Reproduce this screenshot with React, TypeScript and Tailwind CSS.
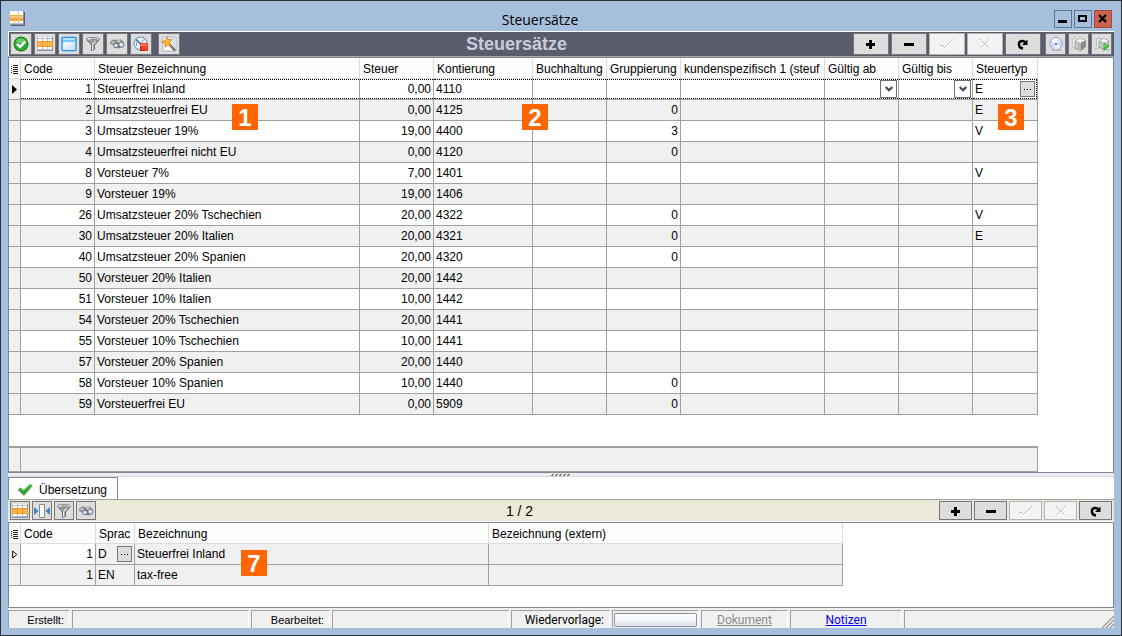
import type { ReactNode } from "react";
import clsx from "clsx";

/* ---------- icons ---------- */

const Svg = ({ children, className = "size-4" }: { children: ReactNode; className?: string }) => (
  <svg viewBox="0 0 16 16" className={clsx("block shrink-0", className)} aria-hidden="true">
    {children}
  </svg>
);

const GridIcon = () => (
  <Svg>
    <path d="M0 1h16v14H0z" fill="#b9bfca" />
    <path d="M1 1h4v1H1zM6 1h4v1H6zM11 1h4v1h-4zM1 3h4v2H1zM6 3h4v2H6zM11 3h4v2h-4zM1 11h4v2H1zM6 11h4v2H6zM11 11h4v2h-4z" fill="#fafbfd" />
    <path d="M0 14h16v1H0zM15 1h1v14h-1z" fill="#8b92a3" />
    <path d="M0 5h16v6H0z" fill="#f39a1e" />
    <path d="M1 6h4v4H1zM6 6h4v4H6zM11 6h4v4h-4z" fill="#fdb656" />
  </Svg>
);

const AppIcon = () => (
  <Svg>
    <path d="M1 1h14v14H1z" fill="#5b6272" />
    <path d="M0 0h14v14H0z" fill="#fff" />
    <path d="M0 4h13v6H0z" fill="#f7a63a" />
    <path d="M0 5h13v2H0z" fill="#fcc77e" />
    <path d="M8 0h1v14H8zM4 10h1v4H4zM0 12h13v1H0z" fill="#c5c2c2" />
    <path d="M13 0h1v14h-1zM0 13h14v1H0z" fill="#8b8f99" />
  </Svg>
);

const OkIcon = () => (
  <Svg>
    <circle cx="8" cy="8" r="7.5" fill="#15801d" />
    <circle cx="8" cy="8" r="6.5" fill="#2fa935" />
    <path d="M2.500 6a6 6 0 0 1 11 0Q8 8 2.500 6z" fill="#6fcb6b" />
    <path d="M4 7.800 7 10.800l5.200-5.200" fill="none" stroke="#fff" strokeWidth="2.600" />
  </Svg>
);

const WindowIcon = () => (
  <Svg>
    <rect x="1" y="1.500" width="14" height="13" rx="1" fill="#eaf2ff" stroke="#1e9bf0" strokeWidth="1.400" />
    <path d="M2 2.400h12V5H2z" fill="#bfe0fb" />
    <path d="M1.500 5h13" stroke="#1e9bf0" />
    <path d="M2 14 14 6v8z" fill="#d7e4fb" />
  </Svg>
);

const FilterIcon = () => (
  <Svg>
    <path d="M1.500 3.500 6.500 9v5.500l3-1.200V9l5-5.500z" fill="#9b9b9b" stroke="#555" strokeWidth="0.800" />
    <path d="M7.600 9v5M7.500 8.500 11 5" stroke="#e9e9e9" strokeWidth="1.200" />
    <ellipse cx="8" cy="3.200" rx="6.600" ry="1.800" fill="#f4f4f4" stroke="#6f6f6f" strokeWidth="0.800" />
    <ellipse cx="8.500" cy="3.500" rx="4" ry="0.900" fill="#8d8d8d" />
  </Svg>
);

const BinocularsIcon = () => (
  <Svg>
    <path d="M1 6 4 3.500 8 4l4-.500 3 3-1 4.500-4 1.500L1.500 8z" fill="#808080" />
    <path d="M1.500 6.500 4 4.500l2.500 1-2 3z" fill="#b9b9b9" />
    <path d="M7 5 10 3.800l3 2-3 1.200z" fill="#c9c9c9" />
    <circle cx="7" cy="9.500" r="2.300" fill="#cfe2f4" stroke="#5d6672" strokeWidth="0.900" />
    <circle cx="12.400" cy="8.700" r="2.600" fill="#cfe2f4" stroke="#5d6672" strokeWidth="0.900" />
    <path d="M6 9h1.500M11.200 8h1.500" stroke="#fff" />
  </Svg>
);

const ClockStopIcon = () => (
  <Svg>
    <circle cx="7.500" cy="7.500" r="6.500" fill="#e8f2fa" stroke="#8fa9c0" strokeWidth="1.400" />
    <path d="M3 3.500 7.500 8" stroke="#3f5f7f" strokeWidth="1.300" />
    <path d="M3.500 6v4M11 3.500 8 7" stroke="#77b0d6" />
    <path d="M7 7h8v8H7z" fill="#e8402a" />
    <path d="M8 8h6v2H8z" fill="#ff7d50" />
    <path d="M7.500 11v3.500H12" fill="none" stroke="#b82414" />
  </Svg>
);

const WizardIcon = () => (
  <Svg>
    <path d="M2 1h13v14H2z" fill="#fbfdff" stroke="#a9bdd6" />
    <path d="M11 2h3v12h-3z" fill="#dbe7f5" />
    <path d="m8 8 6 6.500" stroke="#5f4a30" strokeWidth="2.200" />
    <path d="m6 .8 1.500 3 3.700-.5L8.600 6.200l2 3.300L7 8.600l-3 2.600.1-3.800L.6 5.800l3.800-1.200z" fill="#fdbb3b" stroke="#dd7a12" strokeWidth="0.800" />
    <path d="m9.500 9.500 4 4.500" stroke="#f3c46c" strokeWidth="0.700" />
  </Svg>
);

const DiscIcon = () => (
  <Svg>
    <path d="M5 13h7l2 2H3z" fill="#b9bac6" />
    <circle cx="8" cy="7.500" r="6.200" fill="#d3dafa" stroke="#a3a6cf" strokeWidth="1" />
    <path d="M3.500 4.500A5.500 5.500 0 0 1 10 2.400L8 7.500z" fill="#fbfcff" />
    <path d="M12.500 10.500A5.500 5.500 0 0 1 6 12.700L8 7.500z" fill="#eef1ff" />
    <circle cx="8" cy="7.500" r="2" fill="#f4f6ff" />
    <path d="M7 7h2v2H7z" fill="#6469b8" />
  </Svg>
);

const BoxIcon = () => (
  <Svg>
    <path d="M1.500 3 5 2v8.500L3 12l-1.500-1.500z" fill="#ededed" stroke="#b8b8b8" strokeWidth="0.700" />
    <path d="M4 5 9 2.500l5.500 2V11l-4.500 3.500-6-2z" fill="#bdbdbd" stroke="#909090" strokeWidth="0.700" />
    <path d="M4.500 5 9 2.800l5 1.700-4 2z" fill="#f6f6f6" />
    <path d="M10 6.500 14.500 4.500V11L10 14.500z" fill="#8a8a8a" />
    <path d="M5.500 7v5" stroke="#dedede" />
  </Svg>
);

const BoxRunIcon = () => (
  <Svg>
    <path d="M2.500 3 6 2v8l-2 2-3.500 1 2-2.500z" fill="#eceeec" stroke="#a7aca7" strokeWidth="0.700" />
    <path d="M5 5 9.500 2.500l5 2V10L10 13l-5-1.500z" fill="#c6cac6" stroke="#8a908a" strokeWidth="0.700" />
    <path d="m5.500 5 4-2.200 4.500 1.700-4 2z" fill="#f6f6f6" />
    <path d="M5.500 7.500 8 5M12.500 13l3 1.500" stroke="#8f968f" strokeWidth="0.800" />
    <path d="M9.500 6.500 15.500 10 9.500 15.500z" fill="#3fae3f" />
    <path d="M10.500 8.500 13 10l-2.500 1.500z" fill="#8be07c" />
  </Svg>
);

const FitColumnsIcon = () => (
  <Svg>
    <path d="M5.500 1.500h5v13h-5z" fill="#fdfdfd" stroke="#8a8a8a" />
    <path d="M0 4v8l4.500-4zM16 4v8l-4.500-4z" fill="#3c84c8" />
  </Svg>
);

const GreenCheck = () => (
  <Svg>
    <path d="m1 7.500 2.500-2L6.500 8 13 2l2.500 1.500L7 13.500z" fill="#27a32b" />
    <path d="M2 7.500 3.700 6.300 6.500 9 13 3l1 .6" fill="none" stroke="#72d062" strokeWidth="0.900" />
    <path d="M1 8 7 13.700 15.500 3.800" fill="none" stroke="#8a9a8a" strokeWidth="0.800" />
  </Svg>
);

const PlusIcon = () => (
  <Svg>
    <path d="M6 4h3v3h3v3H9v3H6v-3H3V7h3z" fill="#000" />
  </Svg>
);

const MinusIcon = () => (
  <Svg>
    <path d="M3 7h10v3H3z" fill="#000" />
  </Svg>
);

const AcceptIcon = () => (
  <Svg>
    <path d="M3 10.500 5.500 13 9 9.500 15.500 5" fill="none" stroke="#fff" strokeWidth="1.300" />
    <path d="M1.500 9.500h2l2 2 4-4 4.500-4" fill="none" stroke="#a3a3a3" strokeDasharray="2 1" />
  </Svg>
);

const CancelIcon = () => (
  <Svg>
    <path d="m4 4 9.500 9.500m0-9.500L4 13.500" stroke="#fff" strokeWidth="1.300" />
    <path d="m3 3 9.500 9.500M12.500 3 3 12.500" stroke="#a3a3a3" strokeDasharray="2 1" />
  </Svg>
);

const ReloadIcon = () => (
  <Svg>
    <path d="M8 12.500C3 12 2.500 5.500 7 5c1.500-.2 2.500.3 3.500 1.500" fill="none" stroke="#000" strokeWidth="2.400" />
    <path d="M12.500 3.500v5.500H7z" fill="#000" />
  </Svg>
);

const ListIcon = () => (
  <svg viewBox="0 0 7 9" className="mx-auto block h-[9px] w-[7px]" aria-hidden="true">
    <path d="M2 0h5v1H2zM2 2h5v1H2zM2 4h5v1H2zM2 6h5v1H2zM2 8h5v1H2zM0 1h1v1H0zM0 3h1v1H0zM0 5h1v1H0zM0 7h1v1H0z" fill="#222" />
  </svg>
);

const Dots = () => (
  <svg viewBox="0 0 7 1" className="h-px w-[7px]" aria-hidden="true">
    <path d="M0 0h1v1H0zM3 0h1v1H3zM6 0h1v1H6z" fill="#000" />
  </svg>
);

/* ---------- small parts ---------- */

function ToolButton({ label, children, className, disabled }: { label: string; children: ReactNode; className: string; disabled?: boolean }) {
  return (
    <button
      type="button"
      aria-label={label}
      disabled={disabled}
      className={clsx(
        "flex shrink-0 items-center justify-center border",
        disabled ? "border-[#b4b4b4] bg-[#f3f3f3]" : "border-[#77777b] bg-[#dddddd]",
        className,
      )}
    >
      {children}
    </button>
  );
}

function Badge({ n, className }: { n: number; className: string }) {
  return (
    <span className={clsx("absolute flex size-[26px] items-center justify-center bg-[#ff6600] pt-px text-2xl leading-none font-bold text-white", className)}>
      {n}
    </span>
  );
}

function MoreButton({ label }: { label: string }) {
  return (
    <button type="button" aria-label={label} className="flex h-4 w-[15px] shrink-0 items-center justify-center border border-[#777] bg-[#dddddd]">
      <Dots />
    </button>
  );
}

function DateSelect({ label }: { label: string }) {
  return (
    <div className="relative h-full w-full">
      <select aria-label={label} className="h-full w-full appearance-none bg-transparent pl-0.5">
        <option></option>
      </select>
      <span className="pointer-events-none absolute top-0 right-0 flex h-[18px] w-[17px] items-center justify-center border border-[#707070] bg-white">
        <svg viewBox="0 0 8 6" className="h-1.5 w-2" aria-hidden="true">
          <path d="m.7 1 3.300 3.300L7.300 1" fill="none" stroke="#444" strokeWidth="2" />
        </svg>
      </span>
    </div>
  );
}

const editActions = [
  { label: "Hinzufügen", icon: <PlusIcon />, disabled: false },
  { label: "Löschen", icon: <MinusIcon />, disabled: false },
  { label: "Übernehmen", icon: <AcceptIcon />, disabled: true },
  { label: "Abbrechen", icon: <CancelIcon />, disabled: true },
  { label: "Aktualisieren", icon: <ReloadIcon />, disabled: false },
];

/* ---------- data ---------- */

type Rate = [code: number, name: string, rate: string, account: string, group: string, type: string];

const rates: Rate[] = [
  [1, "Steuerfrei Inland", "0,00", "4110", "", "E"],
  [2, "Umsatzsteuerfrei EU", "0,00", "4125", "0", "E"],
  [3, "Umsatzsteuer 19%", "19,00", "4400", "3", "V"],
  [4, "Umsatzsteuerfrei nicht EU", "0,00", "4120", "0", ""],
  [8, "Vorsteuer 7%", "7,00", "1401", "", "V"],
  [9, "Vorsteuer 19%", "19,00", "1406", "", ""],
  [26, "Umsatzsteuer 20% Tschechien", "20,00", "4322", "0", "V"],
  [30, "Umsatzsteuer 20% Italien", "20,00", "4321", "0", "E"],
  [40, "Umsatzsteuer 20% Spanien", "20,00", "4320", "0", ""],
  [50, "Vorsteuer 20% Italien", "20,00", "1442", "", ""],
  [51, "Vorsteuer 10% Italien", "10,00", "1442", "", ""],
  [54, "Vorsteuer 20% Tschechien", "20,00", "1441", "", ""],
  [55, "Vorsteuer 10% Tschechien", "10,00", "1441", "", ""],
  [57, "Vorsteuer 20% Spanien", "20,00", "1440", "", ""],
  [58, "Vorsteuer 10% Spanien", "10,00", "1440", "0", ""],
  [59, "Vorsteuerfrei EU", "0,00", "5909", "0", ""],
];

const headers = ["Code", "Steuer Bezeichnung", "Steuer", "Kontierung", "Buchhaltung", "Gruppierung", "kundenspezifisch 1 (steuf", "Gültig ab", "Gültig bis", "Steuertyp"];

const thClass = "h-[21px] overflow-hidden border-r border-b border-[#dcdcdc] bg-[#fcfcfc] p-0 pt-0.5 pl-[3px] text-left font-normal whitespace-nowrap";
const tdClass = "h-[21px] border-r border-b border-[#a0a0a0] p-0";
const markClass = "h-[21px] border-r border-b border-[#a0a0a0] bg-[#f0f0f0] p-0";
const markHeadClass = "h-[21px] border-r border-b border-[#dcdcdc] bg-[#fcfcfc] p-0 pt-0.5";

function Cell({ children, right, active, last }: { children?: ReactNode; right?: boolean; active?: boolean; last?: boolean }) {
  return (
    <td className={tdClass}>
      <div
        className={clsx(
          "flex h-5 items-center pl-0.5 whitespace-nowrap",
          right ? "justify-end pr-0.5" : "pr-px",
          active && "border-y border-dotted border-black",
          last && "justify-between border-r",
        )}
      >
        {children}
      </div>
    </td>
  );
}

function RateTable() {
  return (
    <table className="w-[1029px] table-fixed border-separate border-spacing-0">
      <colgroup>
        <col className="w-3" />
        <col className="w-[74px]" />
        <col className="w-[265px]" />
        <col className="w-[74px]" />
        <col className="w-[99px]" />
        <col className="w-[74px]" />
        <col className="w-[74px]" />
        <col className="w-[144px]" />
        <col className="w-[74px]" />
        <col className="w-[74px]" />
        <col className="w-[65px]" />
      </colgroup>
      <thead>
        <tr>
          <th aria-label="Zeile" className={markHeadClass}>
            <ListIcon />
          </th>
          {headers.map((h) => (
            <th key={h} scope="col" className={thClass}>
              {h}
            </th>
          ))}
        </tr>
      </thead>
      <tbody>
        {rates.map(([code, name, rate, account, group, type], i) => {
          const active = i === 0;
          return (
            <tr key={code} className={i % 2 ? "bg-[#f0f0f0]" : "bg-white"}>
              <td className={markClass}>
                {active && (
                  <svg viewBox="0 0 5 9" className="mx-auto block h-[9px] w-[5px]" aria-hidden="true">
                    <path d="M0 0v9l5-4.500z" />
                  </svg>
                )}
              </td>
              <Cell right active={active}>{code}</Cell>
              <Cell active={active}>{name}</Cell>
              <Cell right active={active}>{rate}</Cell>
              <Cell active={active}>{account}</Cell>
              <Cell active={active} />
              <Cell right active={active}>{group}</Cell>
              <Cell active={active} />
              <Cell active={active}>{active && <DateSelect label="Gültig ab" />}</Cell>
              <Cell active={active}>{active && <DateSelect label="Gültig bis" />}</Cell>
              <Cell active={active} last={active}>
                {type}
                {active && <MoreButton label="Steuertyp auswählen" />}
              </Cell>
            </tr>
          );
        })}
      </tbody>
    </table>
  );
}

function TranslationTable() {
  return (
    <table className="w-[834px] table-fixed border-separate border-spacing-0">
      <colgroup>
        <col className="w-3" />
        <col className="w-[75px]" />
        <col className="w-[39px]" />
        <col className="w-[354px]" />
        <col className="w-[354px]" />
      </colgroup>
      <thead>
        <tr>
          <th aria-label="Zeile" className={markHeadClass}>
            <ListIcon />
          </th>
          <th scope="col" className={thClass}>Code</th>
          <th scope="col" className={thClass}>Sprac</th>
          <th scope="col" className={thClass}>Bezeichnung</th>
          <th scope="col" className={thClass}>Bezeichnung (extern)</th>
        </tr>
      </thead>
      <tbody>
        <tr className="bg-[#f0f0f0]">
          <td className={markClass}>
            <svg viewBox="0 0 6 9" className="mx-auto block h-[9px] w-1.5" aria-hidden="true">
              <path d="M.7 1v7l4-3.500z" fill="#fff" stroke="#000" />
            </svg>
          </td>
          <td className="h-[21px] border-r border-b border-[#a0a0a0] bg-white p-0">
            <div className="flex h-5 items-center justify-end px-0.5">1</div>
          </td>
          <td className={tdClass}>
            <div className="flex h-5 items-center justify-between px-0.5">
              D
              <MoreButton label="Sprache auswählen" />
            </div>
          </td>
          <Cell>Steuerfrei Inland</Cell>
          <Cell />
        </tr>
        <tr className="bg-[#f0f0f0]">
          <td className={markClass} />
          <Cell right>1</Cell>
          <Cell>EN</Cell>
          <Cell>tax-free</Cell>
          <Cell />
        </tr>
      </tbody>
    </table>
  );
}

function StatusField({ children, className }: { children?: ReactNode; className: string }) {
  return (
    <div className={clsx("flex h-[18px] shrink-0 items-center border-t border-r border-l border-t-[#a0a0a0] border-r-white border-l-[#a0a0a0]", className)}>
      {children}
    </div>
  );
}

/* ---------- window ---------- */

export default function App() {
  return (
    <div className="flex min-h-screen min-w-fit flex-col border border-[#2c3038] bg-[#a6bfdc] px-[7px] pb-[7px] font-['Liberation_Sans',Arial,sans-serif] text-xs leading-4 text-black">
      <header className="flex h-[30px] shrink-0 items-center pr-0.5 pl-0.5">
        <div className="pt-1.5">
          <AppIcon />
        </div>
        <h1 className="flex-1 pt-2 text-center font-['Open_Sans','Noto_Sans',sans-serif] text-sm">Steuersätze</h1>
        <div className="flex gap-0.5 pt-1.5">
          <button type="button" aria-label="Minimieren" className="flex size-[18px] items-center justify-center border border-[#5e7594]">
            <svg viewBox="0 0 10 10" className="size-2.5" aria-hidden="true"><path d="M0 6h9v3H0z" /></svg>
          </button>
          <button type="button" aria-label="Maximieren" className="flex size-[18px] items-center justify-center border border-[#5e7594]">
            <svg viewBox="0 0 10 10" className="size-2.5" aria-hidden="true"><path fillRule="evenodd" d="M0 1h9v7H0zm2 2v3h5V3z" /></svg>
          </button>
          <button type="button" aria-label="Schließen" className="flex size-[18px] items-center justify-center border border-[#a04a3e] bg-[#cb6351]">
            <svg viewBox="0 0 10 10" className="size-2.5" aria-hidden="true"><path d="m1 1 7 7m0-7L1 8" stroke="#000" strokeWidth="2.400" /></svg>
          </button>
        </div>
      </header>

      <div className="flex h-[25px] shrink-0 items-center border-t border-l border-white bg-[#5a5c6c] pr-0.5 pl-px">
        <div className="flex gap-0.5">
          <ToolButton label="OK" className="size-[22px]"><OkIcon /></ToolButton>
          <ToolButton label="Tabelle" className="size-[22px]"><GridIcon /></ToolButton>
          <ToolButton label="Formular" className="size-[22px]"><WindowIcon /></ToolButton>
          <ToolButton label="Filter" className="size-[22px]"><FilterIcon /></ToolButton>
          <ToolButton label="Suchen" className="size-[22px]"><BinocularsIcon /></ToolButton>
          <ToolButton label="Historie" className="size-[22px]"><ClockStopIcon /></ToolButton>
        </div>
        <ToolButton label="Assistent" className="ml-1.5 size-[22px]"><WizardIcon /></ToolButton>
        <h2 className="flex-1 text-center text-lg leading-5 font-bold text-[#c9ccda]">Steuersätze</h2>
        <div className="flex gap-0.5">
          {editActions.map((a) => (
            <ToolButton key={a.label} label={a.label} disabled={a.disabled} className="h-[22px] w-9">{a.icon}</ToolButton>
          ))}
        </div>
        <div className="ml-1 flex gap-0.5">
          <ToolButton label="Datenträger" className="h-[22px] w-[21px]"><DiscIcon /></ToolButton>
          <ToolButton label="Paket" className="h-[22px] w-[21px]"><BoxIcon /></ToolButton>
          <ToolButton label="Paket ausführen" className="h-[22px] w-[21px]"><BoxRunIcon /></ToolButton>
        </div>
      </div>

      <main className="flex flex-1 flex-col">
        <div className="h-px bg-[#a8a8a8]" />
        <section className="relative flex flex-1 flex-col border border-[#828790] bg-white">
          <RateTable />
          <div className="min-h-4 flex-1" />
          <div className="flex h-[26px] w-[1029px] border-t-2 border-r border-b border-[#a0a0a0] bg-[#f0f0f0]">
            <div className="w-3 border-r border-[#a0a0a0]" />
          </div>
          <Badge n={1} className="top-[46px] left-[223px]" />
          <Badge n={2} className="top-[46px] left-[513px]" />
          <Badge n={3} className="top-[46px] left-[989px]" />
        </section>

        <div className="flex h-1 items-start justify-center border-b border-[#d5d8dd] bg-[#eceef2]">
          <svg viewBox="0 0 20 3" className="h-[3px] w-5" aria-hidden="true">
            <path d="M1 1h2v1H1zM5 1h2v1H5zM9 1h2v1H9zM13 1h2v1h-2zM17 1h2v1h-2zM0 2h2v1H0zM4 2h2v1H4zM8 2h2v1H8zM12 2h2v1h-2zM16 2h2v1h-2z" fill="#777" />
          </svg>
        </div>

        <div role="tablist" className="flex h-[22px] bg-white">
          <button type="button" role="tab" aria-selected="true" className="flex w-[110px] items-center gap-1.5 border-t border-r border-l border-[#828790] pt-0.5 pl-2">
            <GreenCheck />
            <span>Übersetzung</span>
          </button>
        </div>

        <div className="flex h-[22px] items-center border-t border-[#a0a0a0] bg-[#ece9d8] pr-0.5 pl-0.5">
          <div className="flex gap-0.5">
            <ToolButton label="Tabelle" className="h-[19px] w-5"><GridIcon /></ToolButton>
            <ToolButton label="Spaltenbreite" className="h-[19px] w-5"><FitColumnsIcon /></ToolButton>
            <ToolButton label="Filter" className="h-[19px] w-5"><FilterIcon /></ToolButton>
            <ToolButton label="Suchen" className="h-[19px] w-5"><BinocularsIcon /></ToolButton>
          </div>
          <div className="flex-1 pl-1 text-center text-sm leading-4">1 / 2</div>
          <div className="flex gap-0.5">
            {editActions.map((a) => (
              <ToolButton key={a.label} label={a.label} disabled={a.disabled} className="h-[19px] w-[33px]">{a.icon}</ToolButton>
            ))}
          </div>
        </div>
        <div className="h-px bg-white" />

        <section className="relative border border-[#828790] bg-white pb-[21px]">
          <TranslationTable />
          <Badge n={7} className="top-[27px] left-[232px]" />
        </section>
      </main>

      <footer className="flex h-5 shrink-0 items-end gap-0.5 bg-[#f0f0f0]">
        <StatusField className="w-[62px] justify-end pr-[5px] text-[11px]">Erstellt:</StatusField>
        <StatusField className="w-[177px]" />
        <StatusField className="w-[79px] justify-end pr-[5px] text-[11px]">Bearbeitet:</StatusField>
        <StatusField className="w-[177px]" />
        <StatusField className="w-[99px] justify-end pr-[5px] font-[Roboto,sans-serif]">
          <label htmlFor="followup">Wiedervorlage:</label>
        </StatusField>
        <StatusField className="w-[87px] px-px">
          <button id="followup" type="button" className="h-3.5 w-full rounded-xs border border-[#8a94a4] bg-linear-to-b from-white via-[#f4f7fa] to-[#dbe1e8]" />
        </StatusField>
        <StatusField className="w-[87px] justify-center font-[Roboto,sans-serif]">
          <a href="#dokument" className="text-[#8c8c8c] underline">Dokument</a>
        </StatusField>
        <StatusField className="w-[112px] justify-center font-[Roboto,sans-serif]">
          <a href="#notizen" className="text-[#0000ee] underline">Notizen</a>
        </StatusField>
        <div className="flex h-[18px] flex-1 items-end justify-end border-t border-l border-[#a0a0a0]">
          <svg viewBox="0 0 12 12" className="size-3" aria-hidden="true">
            <path d="M0 12 12 0M4 12l8-8M8 12l4-4" stroke="#9a9a9a" strokeWidth="1.300" />
          </svg>
        </div>
      </footer>
    </div>
  );
}
